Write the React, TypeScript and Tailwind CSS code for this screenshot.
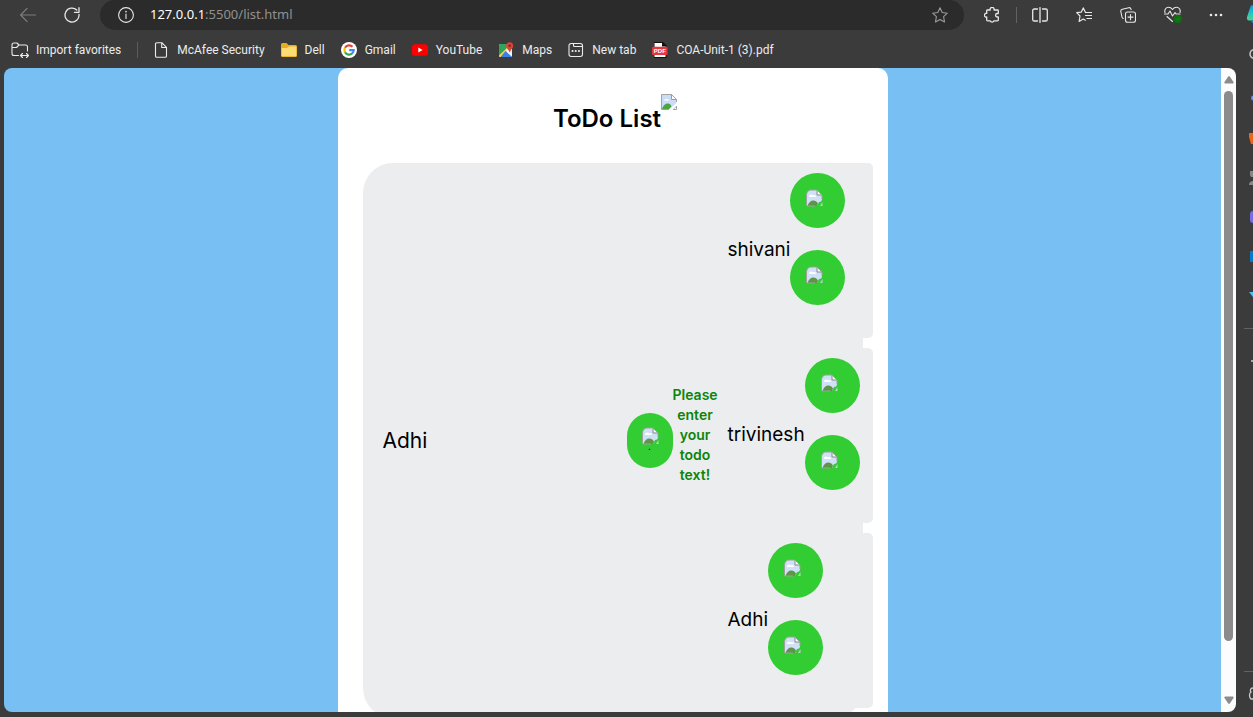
import type { ReactNode } from "react";

function Stroke({ children, size = "size-4", view = "0 0 16 16" }: { children: ReactNode; size?: string; view?: string }) {
  return (
    <svg viewBox={view} className={`${size} shrink-0`} fill="none" stroke="currentColor" strokeWidth="1.1" strokeLinecap="round" strokeLinejoin="round" aria-hidden="true">
      {children}
    </svg>
  );
}

function BrokenImage() {
  return (
    <svg viewBox="0 0 16 16" className="size-4 shrink-0" role="img" aria-label="Missing image">
      <path d="M.5.5h10l5 5V9L8.500 15.500H.5z" fill="#c9dcf8" />
      <path d="M3 6.500C3 4.800 5 4.500 5.500 5.300 7 4.500 8 5.500 8 6.500z" fill="#fff" />
      <path d="M1 15c1-4 4-6 6.500-5.500 2 .5 2.500 1.500 3 3L8 15z" fill="#4aa53a" />
      <path d="M10.500.5v5h5z" fill="#fff" stroke="#9b9b9b" />
      <path d="M8 15.500H.5V.5h10l5 5V8M12 15.500h3.500V12z" fill="none" stroke="#a3a3a3" />
      <path d="M8 16l8-7.500V11l-5 5z" fill="#fff" />
    </svg>
  );
}

function ClippedImage() {
  return (
    <svg viewBox="0 0 18 18" className="size-[18px] shrink-0" role="img" aria-label="Missing image">
      <path d="M1.500 17V6C1.500 3 3.500 1 6 1h6l5 5v4c0 2-1 3-3 3l-2 4z" fill="#cfe0f7" />
      <path d="M4 8c0-3 3-3 4-1.500C9.500 5.500 11 6.500 11 8z" fill="#fff" />
      <path d="M2.500 17c1-4 4-6 6.500-5.500 2 .3 3 1.500 4 3L12 17z" fill="#5f9549" />
      <path d="M12 1v5h5z" fill="#f5f5f5" stroke="#858f85" />
      <path d="M1.500 17V6C1.500 3 3.500 1 6 1h6l5 5v4M2 17h8" fill="none" stroke="#9aa39a" />
      <path d="M17.500 13v4H15z" fill="#c3cbdc" />
    </svg>
  );
}

function RoundButton({ label }: { label: string }) {
  return (
    <button type="button" aria-label={label} className="flex size-[55px] shrink-0 items-start rounded-full bg-[#32cd32] pt-4 pl-[15px]">
      <ClippedImage />
    </button>
  );
}

function FolderImport() {
  return (
    <Stroke size="size-[18px]" view="0 0 18 18">
      <path d="M7.500 14.500H3a2 2 0 0 1-2-2V4a2 2 0 0 1 2-2h3l2 2h6.500A2 2 0 0 1 16.500 6v4M1 6.500h4.500L8 4M10 14.500h7M11.500 12.500l-2 2 2 2M15.500 12.500l2 2-2 2" />
    </Stroke>
  );
}

function PageIcon() {
  return (
    <Stroke>
      <path d="M2.500 2A1.300 1.300 0 0 1 3.800.7h5L13.500 5.400V14a1.300 1.300 0 0 1-1.300 1.300H3.800A1.300 1.300 0 0 1 2.500 14zM8.700.8v4.700h4.700" />
    </Stroke>
  );
}

function YellowFolder() {
  return (
    <svg viewBox="0 0 16 16" className="size-4 shrink-0" aria-hidden="true">
      <path d="M0 2.500A1.500 1.500 0 0 1 1.500 1h4L7.500 3H14.500A1.500 1.500 0 0 1 16 4.500v9a1.500 1.500 0 0 1-1.500 1.500h-13A1.500 1.500 0 0 1 0 13.500z" fill="#e3ac22" />
      <path d="M.7 6h5.300l2-1.500h7.300V13.300a1 1 0 0 1-1 1H1.700a1 1 0 0 1-1-1z" fill="#ffdc73" />
    </svg>
  );
}

function GoogleG() {
  return (
    <svg viewBox="0 0 16 16" className="size-4 shrink-0" aria-hidden="true">
      <circle cx="8" cy="8" r="8" fill="#fff" />
      <g fill="none" strokeWidth="2.200">
        <path d="M4 5.700A4.700 4.700 0 0 1 11.500 4.800" stroke="#ea4335" />
        <path d="M4 10.300a4.700 4.700 0 0 1 0-4.600" stroke="#fbbc05" />
        <path d="M11.300 11.300A4.700 4.700 0 0 1 4 10.300" stroke="#34a853" />
        <path d="M8.200 8.200h4.500a4.700 4.700 0 0 1-1.600 3.300" stroke="#4285f4" />
      </g>
    </svg>
  );
}

function YouTubeMark() {
  return (
    <svg viewBox="0 0 16 16" className="size-4 shrink-0" aria-hidden="true">
      <rect y="2.300" width="16" height="11.400" rx="3" fill="#f00" />
      <path d="M6.300 5.600v4.800L10.600 8z" fill="#fff" />
    </svg>
  );
}

function MapsMark() {
  return (
    <svg viewBox="0 0 16 16" className="size-4 shrink-0" aria-hidden="true">
      <rect x="1" y="2" width="13" height="13" rx="1.500" fill="#e8eaed" />
      <path d="M2.500 2H10L8 8l-7 6V3.500A1.500 1.500 0 0 1 2.500 2z" fill="#2fa35a" />
      <path d="M1 13.500L10 5l1.500 2L3 15H2.500A1.500 1.500 0 0 1 1 13.500z" fill="#fbd14b" />
      <path d="M7.500 9l6.500 6H2.500z" fill="#3d7de8" />
      <path d="M8 8.300l1.200-1.200L14 12v2.500z" fill="#f4f6f8" />
      <path d="M11.700.3a3.500 3.500 0 0 1 3.500 3.500c0 2.700-2.500 3.500-3.300 6.500h-.4c-.8-3-3.300-3.800-3.300-6.500A3.500 3.500 0 0 1 11.700.3z" fill="#db4437" />
      <circle cx="11.700" cy="3.800" r="1.200" fill="#7b2820" />
    </svg>
  );
}

function NewTabIcon() {
  return (
    <Stroke>
      <rect x="1" y="1.500" width="13.500" height="13" rx="2.200" />
      <path d="M5.500 1.500v2a1 1 0 0 0 1 1h8" />
      <path d="M4.500 9h.1M7.700 9h.1M10.900 9h.1" strokeWidth="2" />
    </Stroke>
  );
}

function PdfIcon() {
  return (
    <svg viewBox="0 0 16 16" className="size-4 shrink-0" aria-hidden="true">
      <path d="M2 0h9l3.500 3.500V16H2z" fill="#111" />
      <path d="M2.500 1H10v3.500h3.500V15h-11z" fill="#fff" />
      <rect y="4.800" width="15.500" height="8.200" rx="1" fill="#e5383b" />
      <text x="7.800" y="11.100" textAnchor="middle" fontSize="6" fontWeight="700" fill="#fff" fontFamily="Liberation Sans, sans-serif">PDF</text>
    </svg>
  );
}

const favorites = [
  { label: "McAfee Security", icon: <PageIcon /> },
  { label: "Dell", icon: <YellowFolder /> },
  { label: "Gmail", icon: <GoogleG /> },
  { label: "YouTube", icon: <YouTubeMark /> },
  { label: "Maps", icon: <MapsMark /> },
  { label: "New tab", icon: <NewTabIcon /> },
  { label: "COA-Unit-1 (3).pdf", icon: <PdfIcon /> },
];

const star = "M8 .8l2.200 4.700 5.100.7-3.700 3.500.9 5.200L8 12.400l-4.500 2.500.9-5.200L.7 6.200l5.100-.7z";

function Toolbar() {
  return (
    <div className="flex h-[30px] items-center text-[#e8e8e8]">
      <button type="button" aria-label="Back" className="ml-5 text-[#7c7c7c]">
        <Stroke><path d="M15.500 8H.7M7 1.500L.6 8 7 14.500" /></Stroke>
      </button>
      <button type="button" aria-label="Refresh" className="ml-7">
        <Stroke><path d="M15 7.500A7 7 0 1 1 12.800 3M15 .7v4.600h-4.500" strokeWidth="1.300" /></Stroke>
      </button>
      <div className="ml-5 flex h-[30px] min-w-0 flex-1 items-center rounded-r-full rounded-l-full bg-[#2b2b2b] pr-4 pl-[18px]">
        <button type="button" aria-label="Site information">
          <Stroke><circle cx="8" cy="8" r="7.400" /><path d="M8 7v4.500" /><path d="M8 4.600v.1" strokeWidth="1.600" /></Stroke>
        </button>
        <a href="#address" className="ml-4 flex-1 text-[13px] text-[#919191]"><span className="text-white">127.0.0.1</span>:5500/list.html</a>
        <button type="button" aria-label="Add to favorites" className="text-[#9a9a9a]">
          <Stroke><path d={star} /></Stroke>
        </button>
      </div>
      <button type="button" aria-label="Extensions" className="ml-5">
        <Stroke><path d="M3.500 3h2.700a2 2 0 1 1 3.800 0h3.500a.8.8 0 0 1 .8.800V6.500h-1a1.700 1.700 0 0 0 0 3.500h1v3a.8.8 0 0 1-.8.800H10a2 2 0 0 1-3.800 0H3.500a.8.8 0 0 1-.8-.8V10A1.900 1.900 0 1 1 2.700 6.300V3.800A.8.8 0 0 1 3.500 3z" strokeWidth="1.300" /></Stroke>
      </button>
      <span className="ml-4 h-4 w-px bg-[#626262]" />
      <button type="button" aria-label="Split screen" className="ml-[15px]">
        <Stroke><path d="M5.500 2H2.300A1.600 1.600 0 0 0 .7 3.600v8.800A1.600 1.600 0 0 0 2.300 14h3.200M10.500 2h3.200a1.600 1.600 0 0 1 1.600 1.600v8.800a1.600 1.600 0 0 1-1.600 1.600h-3.200M8 .6v14.800" strokeWidth="1.300" /></Stroke>
      </button>
      <button type="button" aria-label="Favorites" className="ml-7">
        <Stroke><path d="M9.500 5.500L7.300.9 5.200 5.200.7 5.700 4 9l-.9 5.500L7.300 12l2 1.200M10 5.500h5.500M9.500 8.500h6M11 11.500h4.500" strokeWidth="1.200" /></Stroke>
      </button>
      <button type="button" aria-label="Collections" className="ml-7">
        <Stroke><rect x="5.500" y="5" width="10" height="10.300" rx="2" /><path d="M10.500 7.500v5.200M8 10.100h5M3.200 11.500A2 2 0 0 1 2 10L.8 4.500a2 2 0 0 1 1.500-2.300L8.800.7A2 2 0 0 1 11 2.200l.1.500" /></Stroke>
      </button>
      <button type="button" aria-label="Browser essentials" className="ml-7">
        <Stroke size="size-[18px]" view="0 0 18 18">
          <path d="M1 6.500C.2 3.500 2 1.300 4.500 1.300c1.800 0 3 .8 4 2.200 1-1.400 2.200-2.200 4-2.200 2.500 0 4.300 2.200 3.500 5.200M.5 8H4l2-3 2.500 5L11 6.500l1 1.500h4M3 10.500l5.500 5" />
          <circle cx="13.800" cy="13" r="4.200" fill="#0f700f" stroke="none" />
          <path d="M12.200 13l1.200 1.200 2-2" stroke="#2a872a" strokeWidth="0.800" />
        </Stroke>
      </button>
      <button type="button" aria-label="Settings and more" className="mr-[13px] ml-[27px]">
        <svg viewBox="0 0 14 4" className="h-1 w-3.5" fill="currentColor" aria-hidden="true"><circle cx="2" cy="2" r="1.300" /><circle cx="7" cy="2" r="1.300" /><circle cx="12" cy="2" r="1.300" /></svg>
      </button>
    </div>
  );
}

function Favorites() {
  return (
    <nav aria-label="Favorites bar" className="flex h-[38px] items-center pt-0.5 pl-[11px] font-[Roboto,sans-serif] text-xs whitespace-nowrap text-[#ececec]">
      <button type="button" className="flex items-center gap-[7px]"><FolderImport />Import favorites</button>
      <span className="ml-4 h-4 w-px bg-[#5c5c5c]" />
      <div className="ml-[15px] flex items-center gap-4">
        {favorites.map((f) => (
          <a key={f.label} href="#favorite" className="flex items-center gap-2">{f.icon}{f.label}</a>
        ))}
      </div>
    </nav>
  );
}

function TodoPage() {
  return (
    <main className="min-w-0 flex-1 overflow-hidden bg-[#78c0f3] font-[Inter,sans-serif] text-black">
      <div className="mx-auto w-[550px] rounded-[10px] bg-white px-[25px] pt-[26px] pb-10">
        <h1 className="flex h-[69px] items-start justify-center pl-[5px] text-2xl font-semibold">
          <span className="pt-[9px]">ToDo List</span>
          <BrokenImage />
        </h1>
        <div className="flex items-center rounded-[30px] bg-[#ebedee] pl-5">
          <input type="text" aria-label="Todo text" defaultValue="Adhi" className="min-w-0 flex-1 bg-transparent text-[21px] outline-none" />
          <button type="button" aria-label="Add" className="flex h-[55px] w-[46px] shrink-0 flex-col items-center rounded-[23px] bg-[#32cd32] pt-[14px] text-xs leading-none">
            <ClippedImage />
            <span className="-mt-1 text-[10px]">.</span>
          </button>
          <h5 className="mb-3 w-[45px] shrink-0 text-center text-[14px] leading-5 font-semibold text-[#0b850b]">Please enter your todo text!</h5>
          <ul className="-mr-2.5 w-[155px] shrink-0">
            {["shivani", "trivinesh", "Adhi"].map((name) => (
              <li key={name} className="mb-2.5 flex h-[175px] items-center rounded-[5px] bg-[#ebedee] pl-2.5 text-[19px]">
                <span>{name}</span>
                <div className="mb-6 flex flex-col gap-[22px]">
                  <RoundButton label={`Edit ${name}`} />
                  <RoundButton label={`Delete ${name}`} />
                </div>
              </li>
            ))}
          </ul>
        </div>
      </div>
    </main>
  );
}

function Scrollbar() {
  return (
    <div className="flex w-[15px] shrink-0 flex-col items-center bg-[#fcfcfc] py-2" aria-hidden="true">
      <svg viewBox="0 0 10 8" className="h-2 w-2.5 shrink-0" fill="#8b8b8b"><path d="M4 .8a1.200 1.200 0 0 1 2 0L9.800 6.500 9 7.500H1L.2 6.500z" /></svg>
      <div className="my-[7px] flex min-h-0 w-[9px] flex-1 flex-col">
        <div className="flex-[551] rounded-full bg-[#8b8b8b]" />
        <div className="flex-[48]" />
      </div>
      <svg viewBox="0 0 10 8" className="h-2 w-2.5 shrink-0" fill="#8b8b8b"><path d="M4 7.200a1.200 1.200 0 0 0 2 0L9.800 1.500 9 .5H1L.2 1.500z" /></svg>
    </div>
  );
}

function Sidebar() {
  return (
    <aside aria-label="Browser sidebar" className="w-[17px] shrink-0 overflow-hidden">
      <svg viewBox="0 0 17 717" className="h-[717px] w-[17px]" aria-hidden="true">
        <defs>
          <linearGradient id="copilot" x1="0" y1="0" x2="0" y2="1">
            <stop offset="0" stopColor="#1a8fd8" />
            <stop offset="0.500" stopColor="#22c3c8" />
            <stop offset="1" stopColor="#52d58a" />
          </linearGradient>
        </defs>
        <path d="M17 5c-2 0-2.500 1-3 3l-3 9c-.5 2 .5 3.500 2 3.500h4z" fill="url(#copilot)" />
        <path d="M15 20.500h2V23c-1 0-2-1-2-2.500z" fill="#1f7ae0" />
        <circle cx="18.500" cy="54" r="4.500" fill="none" stroke="#c5c5c5" strokeWidth="1.500" />
        <circle cx="17.500" cy="98" r="2.500" fill="#6f8fe0" />
        <path d="M13 133h4v11h-2l-2-7z" fill="#eb661b" />
        <path d="M14 171h3v6h-2l-1-2zM13 185c0-3 2-4 4-4v4z" fill="#888" />
        <path d="M17 211c-2 0-3 1-3 3v6c0 2 1 3 3 3z" fill="#776ce0" />
        <path d="M14 251h3v11h-3z" fill="#0878ca" />
        <path d="M13 292h4v5z" fill="#42c6ed" />
        <path d="M8 328.500h9M8 671.500h9" stroke="#626262" />
        <path d="M15 361h2" stroke="#ccc" strokeWidth="1.500" />
        <path d="M17 688c-3 0-3 3-2 4-2 1-2 5 0 7h2" fill="none" stroke="#ccc" strokeWidth="1.300" />
      </svg>
    </aside>
  );
}

export default function App() {
  return (
    <div className="flex h-screen overflow-hidden bg-[#3b3b3b] font-['Noto_Sans',sans-serif]">
      <div className="flex min-w-0 flex-1 flex-col">
        <header>
          <Toolbar />
          <Favorites />
        </header>
        <div className="mb-[5px] ml-1 flex min-h-0 flex-1 overflow-hidden rounded-lg">
          <TodoPage />
          <Scrollbar />
        </div>
      </div>
      <Sidebar />
    </div>
  );
}
